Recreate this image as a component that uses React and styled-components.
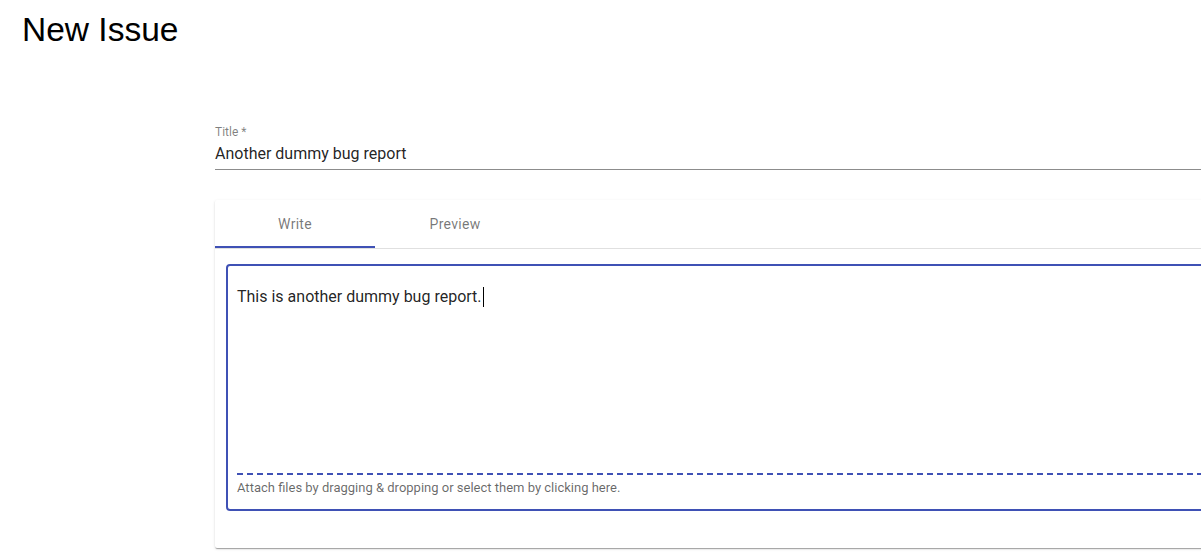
import React from 'react'
import styled, { createGlobalStyle } from 'styled-components'

const Global = createGlobalStyle`
  html, body {
    margin: 0;
    padding: 0;
    background: #fff;
    overflow: hidden;
  }
  body {
    font-family: Roboto, "Noto Sans", sans-serif;
    color: rgba(0, 0, 0, 0.87);
  }
`

const Page = styled.div`
  width: 1201px;
  height: 556px;
  overflow: hidden;
`

const Heading = styled.h1`
  margin: 0;
  padding: 9px 0 0 22px;
  font-family: "Liberation Sans", Arial, sans-serif;
  font-size: 33.5px;
  font-weight: 400;
  line-height: 42px;
  color: #000;
`

const Form = styled.form`
  margin: 73px 0 0 215px;
  width: 1100px;
`

const Field = styled.div`
  display: flex;
  flex-direction: column;
`

const Label = styled.label`
  font-size: 12px;
  line-height: 16px;
  color: rgba(0, 0, 0, 0.5);
`

const Input = styled.div`
  padding: 2px 0 4px;
  font-size: 16px;
  line-height: 23px;
  color: rgba(0, 0, 0, 0.87);
  border-bottom: 1px solid rgba(0, 0, 0, 0.45);
`

const Card = styled.div`
  margin-top: 30px;
  background: #fff;
  border-radius: 2px;
  box-shadow: 0px 2px 1px -1px rgba(0, 0, 0, 0.2),
    0px 1px 1px 0px rgba(0, 0, 0, 0.14), 0px 1px 3px 0px rgba(0, 0, 0, 0.12);
`

const TabBar = styled.div`
  display: flex;
  border-bottom: 1px solid #e0e0e0;
`

const Tab = styled.div`
  width: 160px;
  height: 48px;
  box-sizing: border-box;
  display: flex;
  align-items: center;
  justify-content: center;
  font-size: 14px;
  font-weight: 400;
  letter-spacing: 0.02em;
  color: rgba(0, 0, 0, 0.54);
  border-bottom: 2px solid ${p => (p.$active ? '#3f51b5' : 'transparent')};
  padding-top: 2px;
`

const Panel = styled.div`
  padding: 15px 0 37px 11px;
`

const EditorBox = styled.div`
  border: 2px solid #3f51b5;
  border-radius: 4px;
  padding-bottom: 13px;
`

const Editor = styled.div`
  height: 207px;
  box-sizing: border-box;
  padding: 19px 9px 0;
  font-size: 16px;
  line-height: 24px;
  color: rgba(0, 0, 0, 0.87);
`

const Caret = styled.span`
  display: inline-block;
  width: 1px;
  height: 20px;
  margin-left: 1px;
  background: #000;
  vertical-align: -5px;
`

const AttachBar = styled.div`
  margin: 0 0 0 9px;
  padding-top: 7px;
  background: repeating-linear-gradient(
      to right,
      #3f51b5 0,
      #3f51b5 6px,
      transparent 6px,
      transparent 10px
    )
    top left / 100% 2px no-repeat;
  font-size: 13px;
  line-height: 16px;
  color: rgba(0, 0, 0, 0.6);
`

export default function App() {
  return (
    <Page>
      <Global />
      <Heading>New Issue</Heading>
      <Form>
        <Field>
          <Label>Title *</Label>
          <Input>Another dummy bug report</Input>
        </Field>
        <Card>
          <TabBar>
            <Tab $active>Write</Tab>
            <Tab>Preview</Tab>
          </TabBar>
          <Panel>
            <EditorBox>
              <Editor>
                This is another dummy bug report.<Caret />
              </Editor>
              <AttachBar>
                Attach files by dragging &amp; dropping or select them by clicking here.
              </AttachBar>
            </EditorBox>
          </Panel>
        </Card>
      </Form>
    </Page>
  )
}
